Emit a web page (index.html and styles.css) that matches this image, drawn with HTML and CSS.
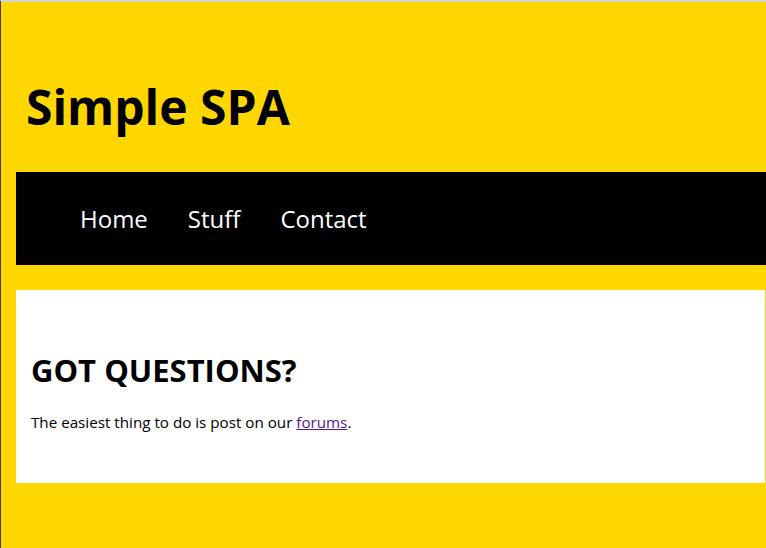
FILE: index.html
```html
<!DOCTYPE html>
<html lang="en">
<head>
<meta charset="utf-8">
<title>Simple SPA</title>
<link rel="stylesheet" href="styles.css">
</head>
<body>
<div class="frame">
  <header class="header">
    <h1 class="title">Simple SPA</h1>
  </header>
  <nav class="nav">
    <ul class="menu">
      <li><a class="menu-link" href="#home">Home</a></li>
      <li><a class="menu-link" href="#stuff">Stuff</a></li>
      <li><a class="menu-link" href="#contact">Contact</a></li>
    </ul>
  </nav>
  <main class="content">
    <h2 class="content-title">GOT QUESTIONS?</h2>
    <p class="content-text">The easiest thing to do is post on our <a class="content-link" href="#forums">forums</a>.</p>
  </main>
</div>
</body>
</html>
```
FILE: styles.css
```css
html, body {
  margin: 0;
  padding: 0;
  height: 100%;
}
body {
  background: #ffd700;
  font-family: "Open Sans", "Noto Sans", sans-serif;
  color: #000;
  border-top: 2px solid #d4d4d4;
  border-left: 1px solid #4a3520;
  box-sizing: border-box;
  overflow: hidden;
}
.frame {
  padding-left: 15px;
}
.header {
  height: 170px;
  box-sizing: border-box;
  padding: 77px 0 0 10px;
}
.title {
  margin: 0;
  font-size: 48px;
  font-weight: 700;
  line-height: 56px;
}
.nav {
  background: #000;
  height: 93px;
  display: flex;
  align-items: center;
}
.menu {
  list-style: none;
  margin: 0;
  padding: 0 0 0 64px;
  display: flex;
  gap: 40px;
}
.menu-link {
  color: #fff;
  text-decoration: none;
  font-size: 24px;
}
.content {
  background: #fff;
  margin-top: 25px;
  margin-right: 1px;
  height: 193px;
  padding: 59px 15px 0;
  box-sizing: border-box;
}
.content-title {
  margin: 0 0 21px;
  font-size: 31px;
  font-weight: 700;
  line-height: 42px;
}
.content-text {
  margin: 0;
  font-size: 15.2px;
  line-height: 21px;
}
.content-link {
  color: #551a8b;
}
```
